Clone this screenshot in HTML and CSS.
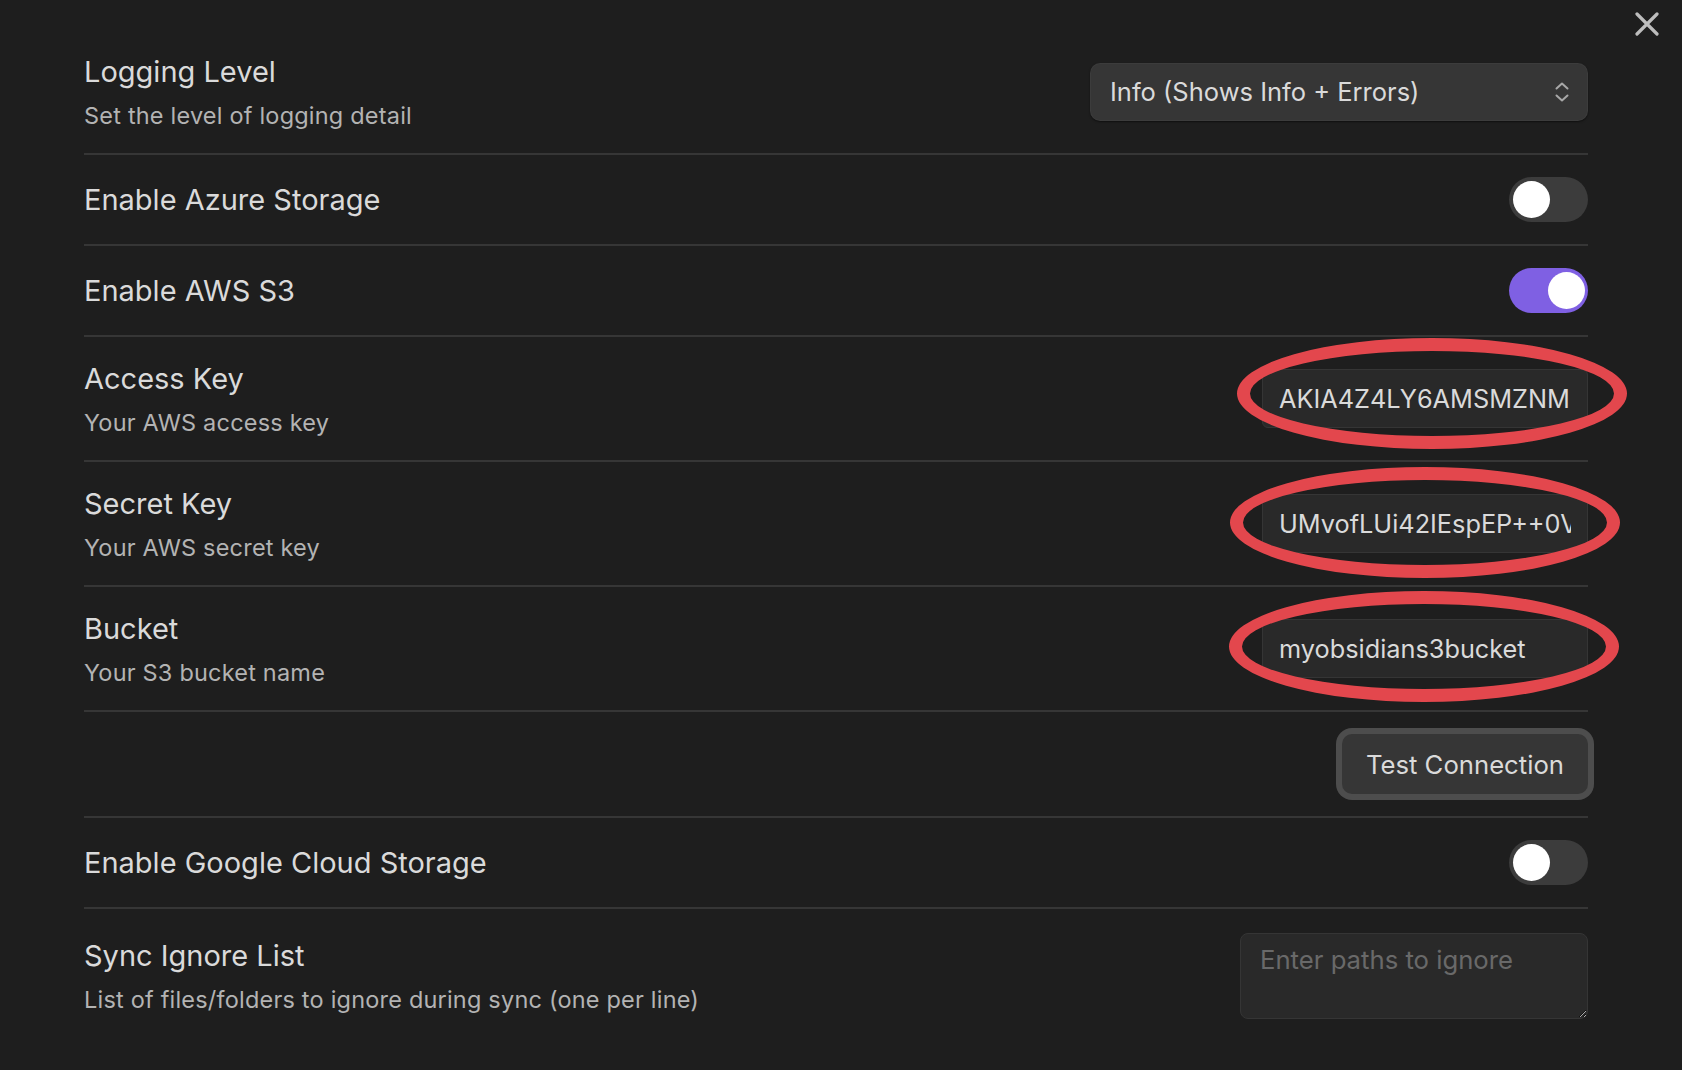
FILE: index.html
```html
<!DOCTYPE html>
<html lang="en">
<head>
<meta charset="utf-8">
<title>Settings</title>
<link rel="stylesheet" href="styles.css">
</head>
<body>
<div class="modal">
  <button class="close" aria-label="Close">
    <svg width="24" height="24" viewBox="0 0 24 24"><path d="M2 2 L22 22 M22 2 L2 22" stroke="#bdbdbd" stroke-width="3.2" stroke-linecap="round" fill="none"/></svg>
  </button>
  <div class="settings">
    <div class="item">
      <div class="info">
        <div class="name">Logging Level</div>
        <div class="desc">Set the level of logging detail</div>
      </div>
      <div class="control">
        <div class="select">
          <span>Info (Shows Info + Errors)</span>
          <svg class="chev" width="14" height="20" viewBox="0 0 14 20"><path d="M1.5 6.5 L7 1.5 L12.5 6.5 M1.5 13.5 L7 18.5 L12.5 13.5" stroke="#a8a8a8" stroke-width="2" fill="none" stroke-linecap="round" stroke-linejoin="round"/></svg>
        </div>
      </div>
    </div>
    <div class="item">
      <div class="info"><div class="name">Enable Azure Storage</div></div>
      <div class="control"><div class="toggle"><span class="knob"></span></div></div>
    </div>
    <div class="item">
      <div class="info"><div class="name">Enable AWS S3</div></div>
      <div class="control"><div class="toggle on"><span class="knob"></span></div></div>
    </div>
    <div class="item">
      <div class="info">
        <div class="name">Access Key</div>
        <div class="desc">Your AWS access key</div>
      </div>
      <div class="control">
        <div class="field">
          <input class="text" type="text" value="AKIA4Z4LY6AMSMZNM">
          <span class="ring ring-a"></span>
        </div>
      </div>
    </div>
    <div class="item">
      <div class="info">
        <div class="name">Secret Key</div>
        <div class="desc">Your AWS secret key</div>
      </div>
      <div class="control">
        <div class="field">
          <input class="text" type="text" value="UMvofLUi42IEspEP++0V">
          <span class="ring ring-b"></span>
        </div>
      </div>
    </div>
    <div class="item">
      <div class="info">
        <div class="name">Bucket</div>
        <div class="desc">Your S3 bucket name</div>
      </div>
      <div class="control">
        <div class="field">
          <input class="text" type="text" value="myobsidians3bucket">
          <span class="ring ring-c"></span>
        </div>
      </div>
    </div>
    <div class="item">
      <div class="info"></div>
      <div class="control"><button class="btn">Test Connection</button></div>
    </div>
    <div class="item">
      <div class="info"><div class="name">Enable Google Cloud Storage</div></div>
      <div class="control"><div class="toggle"><span class="knob"></span></div></div>
    </div>
    <div class="item">
      <div class="info">
        <div class="name">Sync Ignore List</div>
        <div class="desc">List of files/folders to ignore during sync (one per line)</div>
      </div>
      <div class="control">
        <textarea class="area" placeholder="Enter paths to ignore"></textarea>
      </div>
    </div>
  </div>
</div>
</body>
</html>
```
FILE: styles.css
```css
* { box-sizing: border-box; }
html, body {
  margin: 0;
  height: 100%;
  background: #1e1e1e;
}
body {
  font-family: Inter, "Noto Sans", "Liberation Sans", sans-serif;
  color: #dadada;
  overflow: hidden;
}
.modal {
  position: relative;
  min-height: 100%;
  padding: 30px 94px 0 84px;
}
.close {
  position: absolute;
  top: 11px;
  right: 22px;
  width: 26px;
  height: 26px;
  padding: 1px;
  border: 0;
  background: transparent;
}
.close svg { display: block; }
.settings { display: flex; flex-direction: column; }
.item {
  display: flex;
  align-items: center;
  gap: 24px;
  padding: 22px 0;
  border-top: 2px solid #363636;
}
.item:first-child { border-top: 0; }
.info { flex: 1 1 auto; }
.name {
  font-size: 29px;
  line-height: 40px;
  color: #dadada;
}
.desc {
  margin-top: 8px;
  font-size: 23.5px;
  line-height: 31px;
  color: #b3b3b3;
  letter-spacing: 0.2px;
}
.control { flex: 0 0 auto; display: flex; justify-content: flex-end; }
.select {
  width: 498px;
  height: 58px;
  display: flex;
  align-items: center;
  justify-content: space-between;
  padding: 0 19px 0 20px;
  background: #363636;
  border-radius: 10px;
  box-shadow: 0 1px 2px rgba(0,0,0,0.5), inset 0 0 0 1px rgba(255,255,255,0.03);
  font-size: 25.5px;
  color: #dadada;
}
.chev { display: block; }
.toggle {
  position: relative;
  width: 79px;
  height: 45px;
  border-radius: 23px;
  background: #3c3c3c;
}
.toggle .knob {
  position: absolute;
  top: 4px;
  left: 3.5px;
  width: 37px;
  height: 37px;
  border-radius: 50%;
  background: #ffffff;
}
.toggle.on { background: #7f60e3; }
.toggle.on .knob { left: auto; right: 3.5px; }
.field { position: relative; }
.text {
  display: block;
  width: 326px;
  height: 59px;
  padding: 0 16px 0 16px;
  background: #292929;
  border: 1.5px solid #353535;
  border-radius: 6px;
  font-family: inherit;
  font-size: 25.3px;
  color: #dadada;
  outline: none;
}
.ring {
  position: absolute;
  width: 390px;
  height: 111px;
  border: 13px solid #e3474d;
  border-radius: 50%;
  pointer-events: none;
}
.ring-a { left: -25px; top: -31px; }
.ring-b { left: -32px; top: -27px; }
.ring-c { left: -33px; top: -28px; }
.btn {
  height: 60px;
  padding: 0 24px;
  background: #363636;
  border: 0;
  border-radius: 10px;
  box-shadow: 0 0 0 6px #4d4d4d;
  font-family: inherit;
  font-size: 25.7px;
  color: #dadada;
}
.area {
  display: block;
  width: 348px;
  height: 86px;
  margin-top: 2px;
  padding: 10px 19px;
  background: #292929;
  border: 1.5px solid #353535;
  border-radius: 8px;
  font-family: inherit;
  font-size: 25.7px;
  color: #dadada;
  outline: none;
}
.area::placeholder { color: #696969; }
```
